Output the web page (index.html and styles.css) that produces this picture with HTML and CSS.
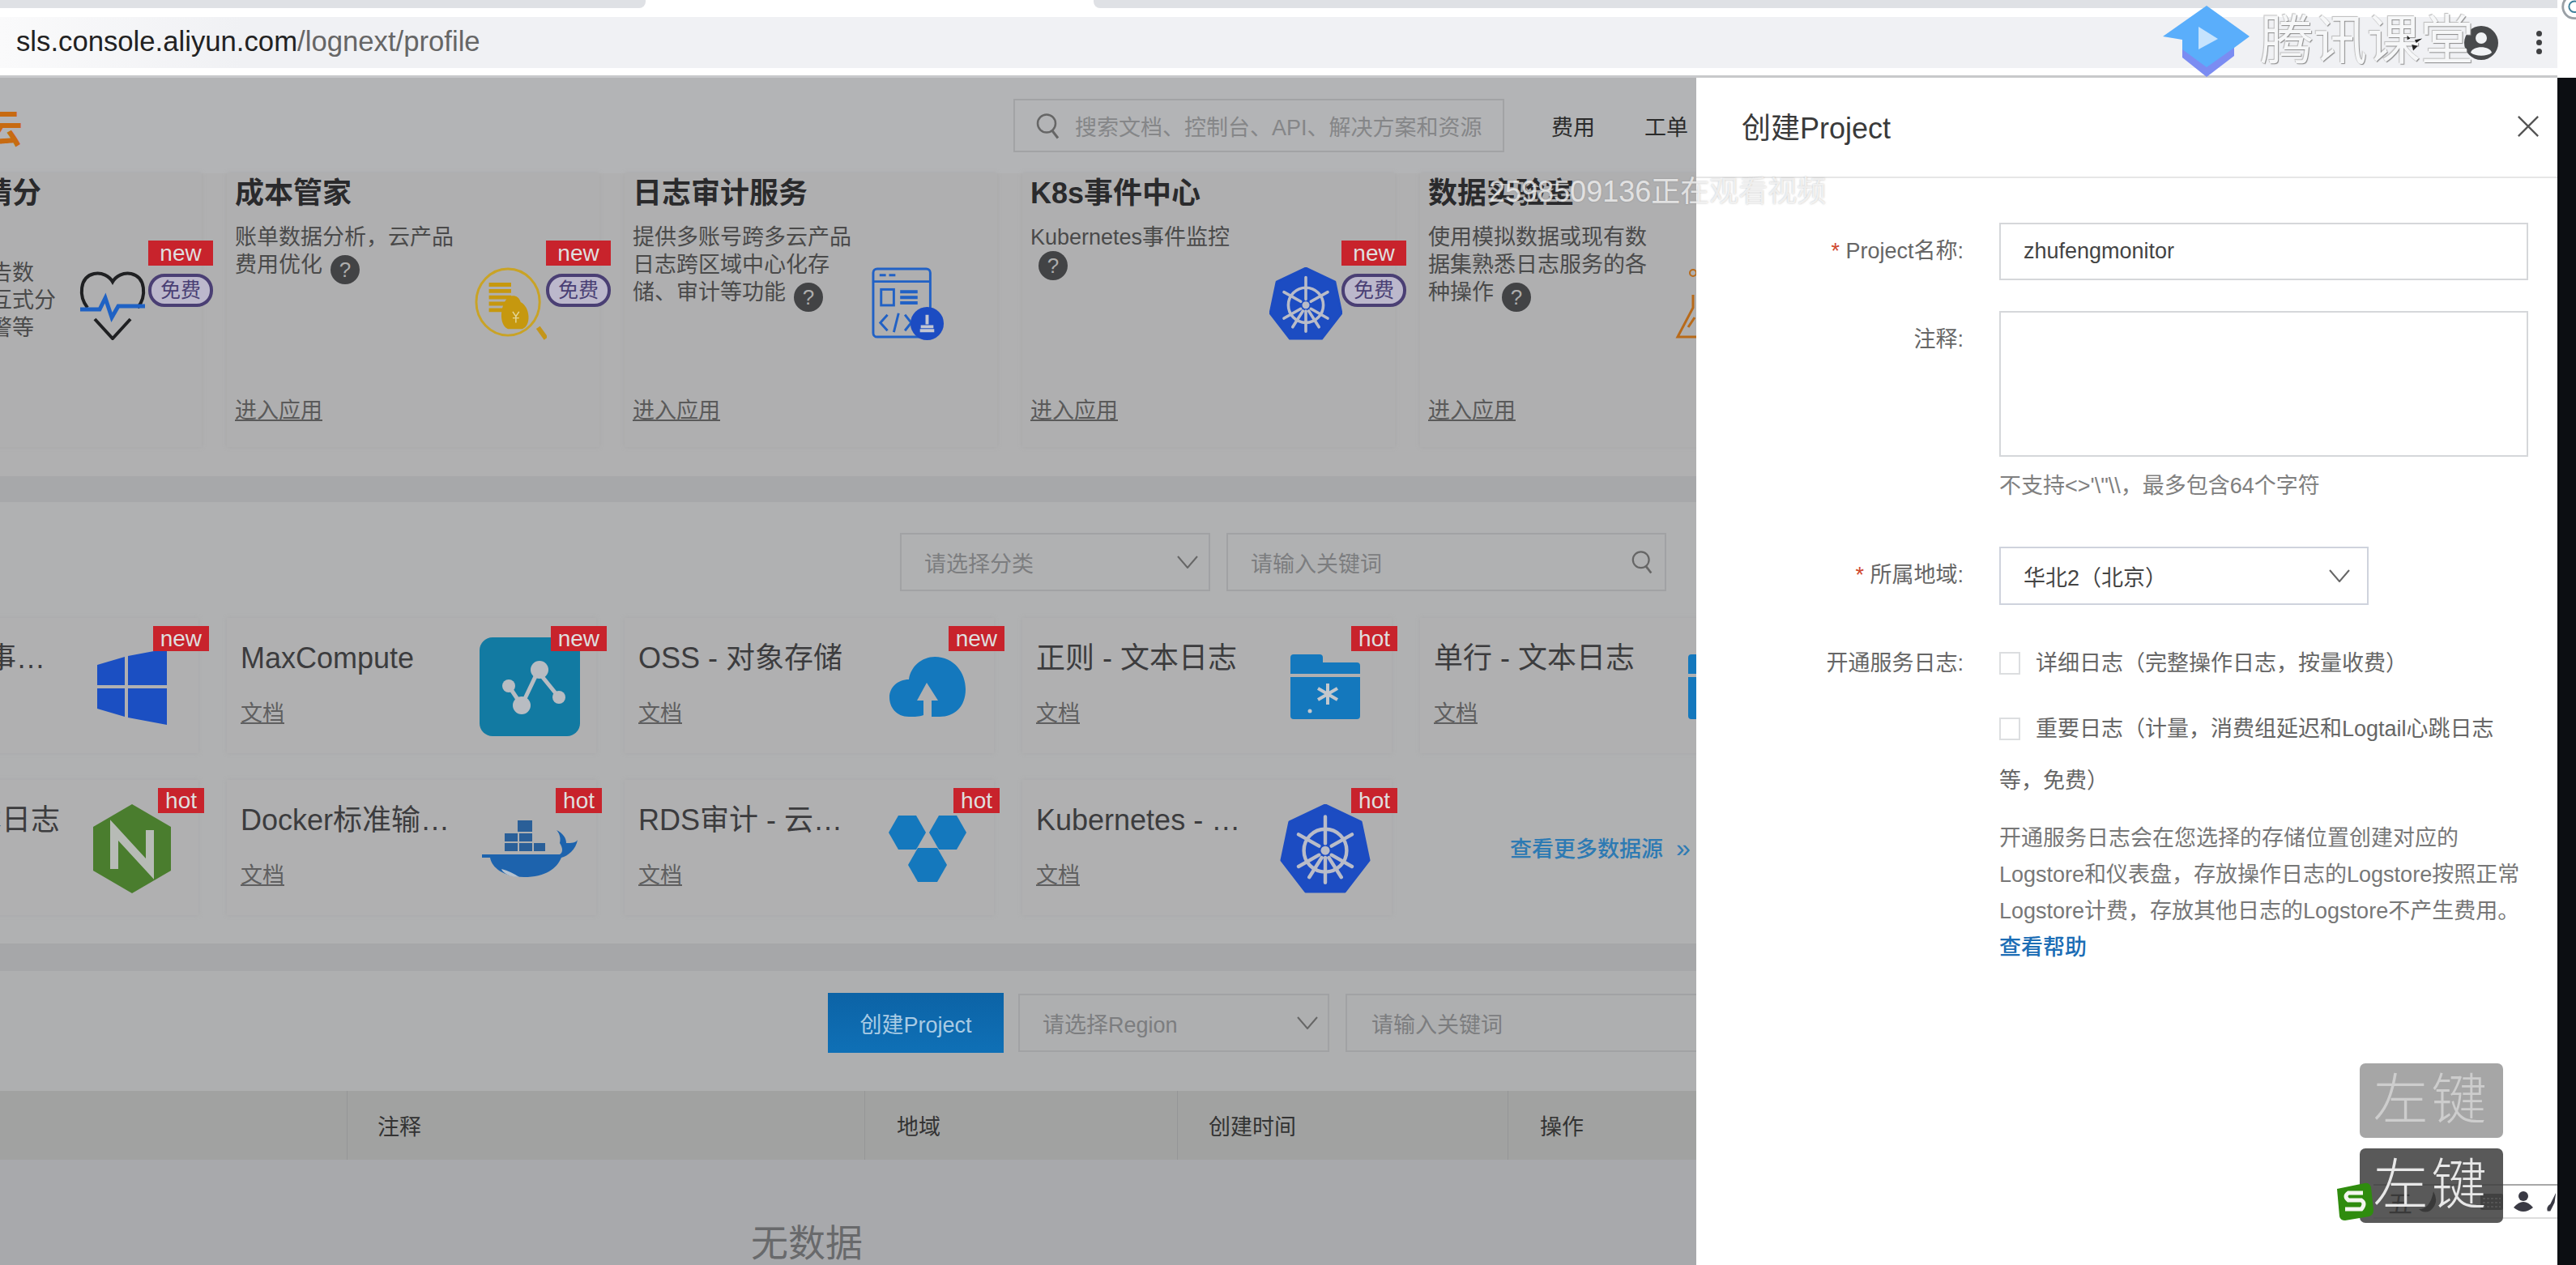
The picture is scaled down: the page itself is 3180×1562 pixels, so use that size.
FILE: index.html
```html
<!DOCTYPE html>
<html>
<head>
  <title>创建Project</title>
  <meta charset="utf-8">
  <link rel="stylesheet" href="styles.css">
</head>
<body>
<svg class="defs" width="0" height="0">
  <symbol id="k8s" viewBox="0 0 100 100">
    <polygon points="50,1 90,20 99,63 72,98 28,98 1,63 10,20" fill="#1c4cc2" stroke="#1c4cc2" stroke-width="3" stroke-linejoin="round"/>
    <g fill="none" stroke="#b9bcc8" stroke-width="4" stroke-linecap="round">
      <circle cx="50" cy="52" r="24"/>
      <path d="M50 14V44M50 60V88M20 34L43 47M57 57L80 70M80 34L57 47M43 57L20 70M32 82L46 60M68 82L54 60"/>
    </g>
    <circle cx="50" cy="52" r="5" fill="#b9bcc8"/>
  </symbol>
  <symbol id="chev" viewBox="0 0 26 16">
    <path d="M1 1L13 15L25 1" fill="none" stroke="#666" stroke-width="2"/>
  </symbol>
  <symbol id="find" viewBox="0 0 30 32">
    <circle cx="13" cy="13" r="11" fill="none" stroke="#666" stroke-width="2.5"/>
    <path d="M20 22L27 31" stroke="#666" stroke-width="3"/>
  </symbol>
</svg>

<div class="screen">
  <div class="chrome">
    <div class="tabs">
      <div class="tab tab-left"></div>
      <div class="tab tab-active"></div>
      <div class="tab tab-right"></div>
    </div>
    <div class="address">
      <span class="url">sls.console.aliyun.com<span class="url-path">/lognext/profile</span></span>
      <svg class="avatar" viewBox="0 0 42 42">
        <circle cx="21" cy="21" r="21" fill="#484a4c"/>
        <circle cx="21" cy="15" r="7" fill="#f1f3f5"/>
        <path d="M8 33C10 24 32 24 34 33C28 38 14 38 8 33Z" fill="#f1f3f5"/>
      </svg>
      <div class="kebab"><i></i><i></i><i></i></div>
    </div>
  </div>

  <div class="desk">
    <div class="page">
      <div class="nav">
        <span class="logo">云</span>
        <div class="nav-search">
          <svg class="icon-find-lg"><use href="#find"/></svg>
          <span>搜索文档、控制台、API、解决方案和资源</span>
        </div>
        <a class="nav-link">费用</a>
        <a class="nav-link">工单</a>
      </div>

      <div class="apps">
        <div class="app">
          <div class="app-text">
            <h3>全链路日志精分</h3>
            <p class="low">支持查询分析报告数<br>据展示，提供交互式分<br>析、仪表盘和告警等</p>
            <a>进入应用</a>
          </div>
          <svg class="app-icon" viewBox="0 0 90 90">
            <path d="M14 50C3 36 4 12 22 8C32 6 41 11 45 18C49 11 58 6 68 8C86 12 87 36 76 50" fill="none" stroke="#1f2022" stroke-width="4"/>
            <path d="M23 64L45 88L67 64" fill="none" stroke="#1f2022" stroke-width="4"/>
            <path d="M5 52H29L36 38L44 62L52 48H85" fill="none" stroke="#1f62c4" stroke-width="5"/>
          </svg>
          <div class="app-tags"><span class="tag-new">new</span><span class="tag-free">免费</span></div>
        </div>

        <div class="app">
          <div class="app-text">
            <h3>成本管家</h3>
            <p>账单数据分析，云产品费用优化<i class="help">?</i></p>
            <a>进入应用</a>
          </div>
          <svg class="app-icon" viewBox="0 0 90 92">
            <ellipse cx="42" cy="44" rx="40" ry="42" fill="none" stroke="#c9a326" stroke-width="3"/>
            <path d="M80 76L90 90" stroke="#c4951a" stroke-width="6"/>
            <path d="M18 22H46M18 30H46M18 38H46M18 46H46M18 54H40" stroke="#c6980f" stroke-width="5"/>
            <path d="M42 38C48 34 56 36 58 44C70 50 72 74 60 78H42C30 72 32 48 42 38Z" fill="#c6980f"/>
            <path d="M48 56L52 62L56 56M52 62V70M48 64H56" fill="none" stroke="#e4d79a" stroke-width="1.5"/>
          </svg>
          <div class="app-tags"><span class="tag-new">new</span><span class="tag-free">免费</span></div>
        </div>

        <div class="app">
          <div class="app-text">
            <h3>日志审计服务</h3>
            <p>提供多账号跨多云产品日志跨区域中心化存储、审计等功能<i class="help">?</i></p>
            <a>进入应用</a>
          </div>
          <svg class="app-icon" viewBox="0 0 92 92">
            <rect x="2" y="2" width="72" height="86" rx="5" fill="none" stroke="#2161c5" stroke-width="3"/>
            <path d="M2 18H74M10 10H18M22 10H30" stroke="#2161c5" stroke-width="3"/>
            <rect x="12" y="28" width="16" height="20" fill="none" stroke="#2161c5" stroke-width="3"/>
            <path d="M36 31H58M36 38H58M36 45H58" stroke="#2161c5" stroke-width="4"/>
            <path d="M20 60L11 70L20 80M34 58L28 82M42 60L50 70L42 80" fill="none" stroke="#2161c5" stroke-width="3"/>
            <circle cx="70" cy="71" r="21" fill="#1c4cc2"/>
            <path d="M70 60V72M61 80H79M62 75H78" stroke="#c3c6d2" stroke-width="4"/>
          </svg>
        </div>

        <div class="app">
          <div class="app-text">
            <h3>K8s事件中心</h3>
            <p>Kubernetes事件监控<i class="help help-wrap">?</i></p>
            <a>进入应用</a>
          </div>
          <svg class="app-icon"><use href="#k8s"/></svg>
          <div class="app-tags"><span class="tag-new">new</span><span class="tag-free">免费</span></div>
        </div>

        <div class="app">
          <div class="app-text">
            <h3>数据实验室</h3>
            <p>使用模拟数据或现有数据集熟悉日志服务的各种操作<i class="help">?</i></p>
            <a>进入应用</a>
          </div>
          <svg class="app-icon" viewBox="0 0 90 90">
            <circle cx="32" cy="7" r="4" fill="none" stroke="#b86a1a" stroke-width="2"/>
            <path d="M32 34V50L13 86H90" fill="none" stroke="#b86a1a" stroke-width="3"/>
            <path d="M26 74L34 62" stroke="#b86a1a" stroke-width="3"/>
          </svg>
        </div>
      </div>

      <div class="band"></div>

      <div class="sources">
        <div class="filters filters-src">
          <div class="control control-cat"><span>请选择分类</span><svg class="chev"><use href="#chev"/></svg></div>
          <div class="control control-kw"><span>请输入关键词</span><svg class="icon-find"><use href="#find"/></svg></div>
        </div>
        <div class="src-grid">
          <div class="src">
            <div class="src-text"><h4>Windows - 事件日志</h4><a>文档</a></div>
            <div class="src-icon">
              <svg class="ic-win" viewBox="0 0 86 94">
                <path d="M0 20L34 10V45H0ZM38 9L86 0V45H38ZM0 49H34V84L0 74ZM38 49H86V94L38 85Z" fill="#1b4fc2"/>
              </svg>
            </div>
            <span class="tag-new tag-src">new</span>
          </div>
          <div class="src">
            <div class="src-text"><h4>MaxCompute</h4><a>文档</a></div>
            <div class="src-icon">
              <svg class="ic-max" viewBox="0 0 124 122">
                <rect width="124" height="122" rx="16" fill="#127aa2"/>
                <path d="M36 60L52 84L72 42L98 74" fill="none" stroke="#b8bcc2" stroke-width="5"/>
                <circle cx="36" cy="60" r="8" fill="#b8bcc2"/>
                <circle cx="52" cy="84" r="11" fill="#b8bcc2"/>
                <circle cx="74" cy="40" r="11" fill="#b8bcc2"/>
                <circle cx="98" cy="74" r="8" fill="#b8bcc2"/>
              </svg>
            </div>
            <span class="tag-new tag-src">new</span>
          </div>
          <div class="src">
            <div class="src-text"><h4>OSS - 对象存储</h4><a>文档</a></div>
            <div class="src-icon">
              <svg class="ic-cloud" viewBox="0 0 94 74">
                <path d="M56 0C80 0 94 20 94 40C94 62 80 74 62 74H52V54H60L46 32L34 54H42V72C36 74 32 74 24 74C8 74 0 62 0 50C0 38 10 28 24 28C26 12 40 0 56 0Z" fill="#1478bd"/>
              </svg>
            </div>
            <span class="tag-new tag-src">new</span>
          </div>
          <div class="src">
            <div class="src-text"><h4>正则 - 文本日志</h4><a>文档</a></div>
            <div class="src-icon">
              <svg class="ic-folder" viewBox="0 0 86 80">
                <path d="M0 4Q0 0 4 0H36Q40 0 40 4V10H82Q86 10 86 14V24H0ZM0 28H86V76Q86 80 82 80H4Q0 80 0 76Z" fill="#1478bd"/>
                <path d="M46 36V62M34 42L58 56M58 42L34 56" stroke="#c3c7cc" stroke-width="4"/>
                <circle cx="24" cy="70" r="2.5" fill="#c3c7cc"/>
              </svg>
            </div>
            <span class="tag-hot tag-src">hot</span>
          </div>
          <div class="src">
            <div class="src-text"><h4>单行 - 文本日志</h4><a>文档</a></div>
            <div class="src-icon">
              <svg class="ic-folder" viewBox="0 0 86 80">
                <path d="M0 4Q0 0 4 0H36Q40 0 40 4V10H82Q86 10 86 14V24H0ZM0 28H86V76Q86 80 82 80H4Q0 80 0 76Z" fill="#1478bd"/>
              </svg>
            </div>
          </div>

          <div class="src">
            <div class="src-text"><h4>Nginx - 文本日志</h4><a>文档</a></div>
            <div class="src-icon">
              <svg class="ic-nginx" viewBox="0 0 96 110">
                <polygon points="48,0 96,28 96,82 48,110 0,82 0,28" fill="#4a7d2e"/>
                <path d="M26 80V32L70 80V32" fill="none" stroke="#b7bbb6" stroke-width="10"/>
              </svg>
            </div>
            <span class="tag-hot tag-src">hot</span>
          </div>
          <div class="src">
            <div class="src-text"><h4>Docker标准输出内容</h4><a>文档</a></div>
            <div class="src-icon">
              <svg class="ic-whale" viewBox="0 0 118 70">
                <path d="M44 0H62V14H44ZM28 16H44V26H28ZM46 16H62V26H46ZM28 28H44V38H28ZM46 28H62V38H46ZM64 28H78V38H64Z" fill="#2a5f98"/>
                <path d="M0 42H96C100 40 100 34 96 28C98 20 94 14 92 12C100 16 104 22 104 28C110 28 116 28 118 24C116 36 106 44 98 46C92 60 78 70 52 70C26 70 12 58 10 46H0Z" fill="#1d63ad"/>
                <path d="M24 60C32 62 40 66 46 70C36 70 26 66 24 60Z" fill="#b6c2cf"/>
              </svg>
            </div>
            <span class="tag-hot tag-src">hot</span>
          </div>
          <div class="src">
            <div class="src-text"><h4>RDS审计 - 云数据库</h4><a>文档</a></div>
            <div class="src-icon">
              <svg class="ic-hex" viewBox="0 0 96 82">
                <polygon points="0,21 12,0 34,0 46,21 34,42 12,42" fill="#1478bd"/>
                <polygon points="50,21 62,0 84,0 96,21 84,42 62,42" fill="#1478bd"/>
                <polygon points="24,61 36,40 60,40 72,61 60,82 36,82" fill="#1478bd"/>
              </svg>
            </div>
            <span class="tag-hot tag-src">hot</span>
          </div>
          <div class="src">
            <div class="src-text"><h4>Kubernetes - 文本日志</h4><a>文档</a></div>
            <div class="src-icon"><svg class="ic-k8s"><use href="#k8s"/></svg></div>
            <span class="tag-hot tag-src">hot</span>
          </div>
          <div class="src src-more"><a>查看更多数据源<span class="more-arrow">»</span></a></div>
        </div>
      </div>

      <div class="band band-2"></div>

      <div class="projects">
        <div class="filters filters-proj">
          <button class="btn-create">创建Project</button>
          <div class="control control-region"><span>请选择Region</span><svg class="chev"><use href="#chev"/></svg></div>
          <div class="control control-proj-kw"><span>请输入关键词</span></div>
        </div>
        <div class="thead">
          <div class="th th-name"></div>
          <div class="th th-note">注释</div>
          <div class="th th-region">地域</div>
          <div class="th th-time">创建时间</div>
          <div class="th th-op">操作</div>
        </div>
        <div class="empty">无数据</div>
      </div>
    </div>

    <div class="drawer">
      <div class="drawer-head">
        <span class="drawer-title">创建Project</span>
        <svg class="close" viewBox="0 0 30 30"><path d="M2 2L28 28M28 2L2 28" stroke="#555" stroke-width="2.5"/></svg>
      </div>
      <div class="form">
        <div class="row">
          <label class="label"><b>*</b> Project名称:</label>
          <div class="input">zhufengmonitor</div>
        </div>
        <div class="row row-note">
          <label class="label">注释:</label>
          <div>
            <div class="textarea"></div>
            <div class="hint">不支持&lt;&gt;'\"\\，最多包含64个字符</div>
          </div>
        </div>
        <div class="row row-region">
          <label class="label"><b>*</b> 所属地域:</label>
          <div class="input input-select"><span>华北2（北京）</span><svg class="chev"><use href="#chev"/></svg></div>
        </div>
        <div class="row row-log">
          <label class="label label-log">开通服务日志:</label>
          <div>
            <div class="check"><i class="box"></i>详细日志（完整操作日志，按量收费）</div>
            <div class="check check-2"><i class="box"></i>重要日志（计量，消费组延迟和Logtail心跳日志等，免费）</div>
            <p class="note">开通服务日志会在您选择的存储位置创建对应的 Logstore和仪表盘，存放操作日志的Logstore按照正常 Logstore计费，存放其他日志的Logstore不产生费用。 <a>查看帮助</a></p>
          </div>
        </div>
      </div>
    </div>
    <div class="strip"></div>
  </div>

  <!-- video overlays -->
  <svg class="tk-logo" viewBox="0 0 107 88">
    <polygon points="24,50 54,32 88,50 88,62 54,88 24,64" fill="#7b8cf2"/>
    <polygon points="54,0 107,38 88,52 54,76 24,54 24,42 0,38" fill="#5aaefb"/>
    <polygon points="44,26 68,41 44,54" fill="#c6e3fd"/>
  </svg>
  <div class="tk-name">腾讯课堂</div>
  <div class="viewer">2598509136正在观看视频</div>
  <svg class="star" viewBox="0 0 30 30"><path d="M6 4L10 8L6 10ZM16 10L26 8L18 14ZM12 16L20 18L14 24Z" fill="#222"/></svg>
  <svg class="corner" viewBox="0 0 24 28"><circle cx="22" cy="8" r="15" fill="none" stroke="#9aa0a6" stroke-width="3"/><circle cx="22" cy="8" r="7" fill="none" stroke="#3f7f9a" stroke-width="2"/></svg>

  <div class="ime">
    <svg class="ime-logo" viewBox="0 0 47 47">
      <path d="M2 8L36 1Q42 0 44 6L47 34Q47 40 42 42L12 47Q6 47 5 42Z" fill="#2f8c0e"/>
      <path d="M34 13H16Q10 17 16 22H32Q38 26 32 33H12" fill="none" stroke="#f4f6f0" stroke-width="5"/>
    </svg>
    <div class="ime-bar">
      <span class="ime-mode">五</span>
      <svg class="ime-moon" viewBox="0 0 24 26"><path d="M18 0Q26 14 14 24Q6 28 0 22Q14 22 18 0Z" fill="#222"/></svg>
      <svg class="ime-kb" viewBox="0 0 28 20"><rect width="28" height="20" rx="2" fill="#555"/><path d="M3 6H25M3 11H25M3 16H25" stroke="#ddd" stroke-width="2" stroke-dasharray="3 2"/></svg>
      <svg class="ime-user" viewBox="0 0 24 26"><circle cx="12" cy="6" r="6" fill="#3a3a44"/><path d="M0 20Q12 6 24 20Q12 30 0 20Z" fill="#3a3a44"/></svg>
      <svg class="ime-tool" viewBox="0 0 16 26"><path d="M14 0L6 16Q0 20 2 26H6L12 14Z" fill="#3a3a44"/></svg>
    </div>
  </div>
  <div class="key key-fade">左键</div>
  <div class="key key-on">左键</div>
</div>
</body>
</html>
```

FILE: styles.css
```css
* { box-sizing: border-box; }
html, body { margin: 0; padding: 0; }
body {
  width: 3180px;
  height: 1562px;
  overflow: hidden;
  background: #fff;
  font-family: "Liberation Sans", "Noto Sans CJK SC", sans-serif;
  font-size: 27px;
  color: #444;
}
a { text-decoration: none; }
h3, h4, p { margin: 0; }
i { font-style: normal; }
.defs { position: absolute; }

.screen {
  position: relative;
  width: 3180px;
  height: 1562px;
  overflow: hidden;
  filter: blur(0.6px);
}

/* browser chrome */
.chrome { height: 96px; width: 3157px; background: #fff; border-bottom: 3px solid #c8c9cb; }
.tabs { display: flex; height: 10px; }
.tab-left { width: 797px; background: #dfe1e5; border-bottom-right-radius: 8px; }
.tab-active { width: 553px; background: #fff; }
.tab-right { flex: 1; background: #dfe1e5; border-bottom-left-radius: 8px; }
.address {
  display: flex;
  align-items: center;
  height: 63px;
  margin-top: 11px;
  padding-left: 20px;
  background: linear-gradient(90deg, #fafafb, #f0f1f4 300px);
}
.url { margin-bottom: 2px; font-size: 34.7px; color: #222; }
.url-path { color: #666; }
.avatar { width: 42px; height: 42px; margin-left: auto; }
.kebab { display: flex; flex-direction: column; gap: 4px; margin: 0 19px 0 47px; }
.kebab i { width: 7px; height: 7px; border-radius: 50%; background: #3f4042; }

/* page under the mask */
.desk { display: flex; height: 1466px; }
.page { width: 2094px; flex: none; overflow: hidden; background: #aeafb0; }

.nav {
  display: flex;
  align-items: center;
  height: 118px;
  background: #b3b4b6;
}
.logo {
  margin-left: -20px;
  font-size: 48px;
  font-weight: 700;
  color: #c76b12;
}
.nav-search {
  display: flex;
  align-items: center;
  width: 606px;
  height: 66px;
  margin-left: auto;
  margin-right: 58px;
  padding-left: 26px;
  border: 2px solid #a2a3a5;
  color: #858688;
}
.icon-find-lg { width: 30px; height: 33px; margin-right: 18px; }
.nav-link { width: 115px; flex: none; color: #2b2b2b; }
.nav-link:last-child { width: 64px; }

.apps {
  display: grid;
  grid-template-columns: repeat(5, 460px);
  column-gap: 31px;
  height: 374px;
  margin-left: -211px;
  background: #b0b0b1;
}
.apps, .sources { width: 2400px; }
.app {
  display: flex;
  height: 338px;
  padding-left: 10px;
  background: #afafb0;
  box-shadow: 0 0 5px #a8a8a9;
}
.app-text { display: flex; flex-direction: column; width: 295px; flex: none; }
.app-text h3 { font-size: 36px; line-height: 50px; color: #2a2a2c; }
.app-text p { width: 275px; margin-top: 12px; line-height: 34px; color: #4a4a4a; }
.app-text p.low { margin-top: 56px; }
.app-text a {
  margin-top: auto;
  margin-bottom: 28px;
  line-height: 34px;
  color: #5a5a5a;
  text-decoration: underline;
}
.help {
  display: inline-block;
  width: 36px;
  height: 36px;
  margin-left: 10px;
  border-radius: 50%;
  background: #424345;
  color: #aeaeae;
  font-size: 26px;
  line-height: 36px;
  text-align: center;
  vertical-align: -6px;
}
.help-wrap { display: block; margin: 0 0 0 10px; }
.app-icon { width: 90px; height: 90px; flex: none; margin-top: 116px; }
.app-tags {
  display: flex;
  flex-direction: column;
  flex: none;
  gap: 10px;
  width: 80px;
  margin-top: 83px;
  margin-left: -1px;
}

.tag-new, .tag-hot {
  background: #c8232c;
  color: #dfdfdf;
  font-size: 28px;
  line-height: 31px;
  text-align: center;
}
.tag-free {
  height: 41px;
  border: 4px solid #4a3f74;
  border-radius: 20px;
  background: #bcb8cc;
  color: #4a3f74;
  font-size: 25px;
  line-height: 32px;
  text-align: center;
}

.band { height: 32px; background: #a7a8aa; }
.band-2 { height: 34px; background: #a6a7a9; }

.sources { height: 545px; padding-top: 38px; background: #b0b1b2; }
.filters { display: flex; }
.filters-src { gap: 20px; padding-left: 1111px; }
.filters-proj { gap: 18px; padding-left: 1022px; padding-top: 28px; }
.control {
  display: flex;
  flex: none;
  align-items: center;
  justify-content: space-between;
  height: 72px;
  border: 2px solid #a1a2a4;
  color: #7c7d7f;
}
.control-cat { width: 383px; padding: 0 13px 0 28px; }
.control-kw { width: 543px; padding: 0 14px 0 28px; }
.control-region { width: 384px; padding: 0 12px 0 28px; }
.control-proj-kw { width: 450px; margin-left: 2px; padding-left: 30px; }
.chev { width: 26px; height: 16px; flex: none; }
.icon-find { width: 27px; height: 30px; }

.src-grid {
  display: grid;
  grid-template-columns: repeat(5, 456px);
  grid-auto-rows: 167px;
  column-gap: 35px;
  row-gap: 33px;
  margin-top: 33px;
  margin-left: -211px;
}
.src {
  position: relative;
  display: flex;
  padding-left: 17px;
  background: #b0b0b1;
  box-shadow: 0 0 5px #a9a9aa;
}
.src-text { width: 276px; flex: none; }
.src-text h4 {
  margin-top: 25px;
  font-size: 36px;
  font-weight: 400;
  line-height: 50px;
  color: #3c3c3e;
  white-space: nowrap;
  overflow: hidden;
  text-overflow: ellipsis;
}
.src-text a {
  display: block;
  margin-top: 23px;
  line-height: 40px;
  color: #5f5f60;
  text-decoration: underline;
}
.src-icon {
  display: flex;
  align-items: center;
  justify-content: center;
  width: 162px;
  padding-top: 2px;
  flex: none;
}
.tag-src { position: absolute; top: 10px; right: -13px; height: 31px; padding: 0 9px; }
.tag-hot.tag-src { right: -7px; }
.ic-win { width: 86px; height: 94px; }
.ic-max { width: 124px; height: 122px; }
.ic-cloud { width: 94px; height: 74px; }
.ic-folder { width: 86px; height: 80px; }
.ic-nginx { width: 96px; height: 110px; }
.ic-whale { width: 118px; height: 70px; }
.ic-hex { width: 96px; height: 82px; }
.ic-k8s { width: 112px; height: 110px; }
.src-more { align-items: center; padding-left: 111px; background: none; box-shadow: none; }
.src-more a { color: #2d7ab3; font-weight: 500; white-space: nowrap; }
.more-arrow { margin-left: 16px; font-size: 32px; }

.projects { height: 400px; }
.btn-create {
  flex: none;
  width: 217px;
  height: 74px;
  margin-top: -1px;
  border: none;
  background: linear-gradient(180deg, #0c63a6, #0f70b6);
  color: #a9cbe4;
  font-family: inherit;
  font-size: 27px;
}
.thead {
  display: flex;
  height: 85px;
  margin-top: 47px;
  background: #a1a2a1;
  line-height: 90px;
  color: #333;
}
.th { flex: none; border-right: 1px solid #959697; }
.th-name { width: 429px; }
.th-note { width: 639px; padding-left: 37px; }
.th-region { width: 386px; padding-left: 39px; }
.th-time { width: 408px; padding-left: 38px; }
.th-op { width: 232px; padding-left: 39px; border-right: none; }
.empty {
  height: 180px;
  padding: 70px 102px 0 0;
  background: #a8a9ac;
  font-size: 46px;
  line-height: 66px;
  text-align: center;
  color: #68696b;
}

/* drawer */
.drawer { width: 1063px; flex: none; background: #fff; }
.drawer-head {
  display: flex;
  align-items: center;
  justify-content: space-between;
  height: 124px;
  padding: 0 22px 0 56px;
  border-bottom: 2px solid #e6e6e6;
  font-size: 36px;
  color: #3a3a3a;
}
.drawer-title { margin-bottom: 5px; }
.close { width: 28px; height: 28px; margin-bottom: 2px; }
.form { padding-top: 55px; }
.row {
  display: grid;
  grid-template-columns: 330px 653px;
  column-gap: 44px;
  align-items: start;
}
.row-note { margin-top: 38px; }
.row-region { margin-top: 57px; }
.row-log { margin-top: 40px; }
.label { line-height: 71px; text-align: right; color: #666; white-space: nowrap; }
.label b { color: #d0492f; font-weight: 400; }
.label-log { line-height: 64px; }
.input {
  display: flex;
  align-items: center;
  height: 71px;
  padding-left: 28px;
  border: 2px solid #d5d7da;
  color: #444;
}
.input-select { justify-content: space-between; width: 456px; height: 72px; padding: 0 21px 0 28px; border-color: #cfd3dd; }
.textarea { height: 180px; border: 2px solid #d5d7da; }
.hint { margin-top: 18px; line-height: 36px; color: #808080; }
.check { line-height: 64px; color: #666; }
.check-2 { margin-top: 17px; }
.box {
  display: inline-block;
  width: 26px;
  height: 28px;
  margin-right: 19px;
  border: 2px solid #dcdee0;
  vertical-align: -5px;
}
.note { margin-top: 17px; line-height: 45px; color: #777; }
.note a { color: #1c6db5; font-weight: 500; }
.strip { flex: 1; background: #0c0e12; }

/* video overlays */
.tk-logo { position: absolute; left: 2670px; top: 7px; width: 107px; height: 88px; }
.tk-name {
  position: absolute;
  left: 2790px;
  top: 12px;
  font-size: 66px;
  line-height: 76px;
  color: #f6f7f8;
  text-shadow: 1px 1px 1px #8a8a8a, -1px -1px 1px #bbb;
  white-space: nowrap;
}
.viewer {
  position: absolute;
  left: 1838px;
  top: 212px;
  font-size: 36px;
  line-height: 50px;
  color: rgba(255, 255, 255, 0.72);
  text-shadow: 0 0 2px rgba(120, 120, 120, 0.5);
  white-space: nowrap;
}
.star { position: absolute; left: 2966px; top: 40px; width: 28px; height: 28px; }
.corner { position: absolute; left: 3157px; top: 0; width: 23px; height: 28px; }

.ime { position: absolute; left: 2883px; top: 1460px; display: flex; align-items: center; width: 274px; height: 47px; }
.ime-logo { position: relative; z-index: 1; width: 47px; height: 47px; flex: none; }
.ime-bar {
  display: flex;
  align-items: center;
  width: 227px;
  height: 43px;
  border-top: 2px solid #a8a8a8;
  border-bottom: 2px solid #ddd;
  background: #fff;
}
.ime-mode { margin-left: 18px; font-size: 30px; color: #222; }
.ime-moon { width: 24px; height: 26px; margin-left: 8px; }
.ime-kb { width: 28px; height: 20px; margin-left: auto; }
.ime-user { width: 24px; height: 26px; margin-left: 13px; }
.ime-tool { width: 14px; height: 26px; margin-left: 16px; flex: none; }

.key {
  position: absolute;
  left: 2913px;
  width: 177px;
  height: 92px;
  border-radius: 7px;
  font-size: 68px;
  font-weight: 300;
  line-height: 90px;
  text-align: center;
  letter-spacing: 4px;
  white-space: nowrap;
}
.key-fade { top: 1313px; background: #a6a6a6; color: #cdcdcd; }
.key-on { top: 1418px; background: rgba(62, 62, 62, 0.86); color: #e8e8e8; }
```
